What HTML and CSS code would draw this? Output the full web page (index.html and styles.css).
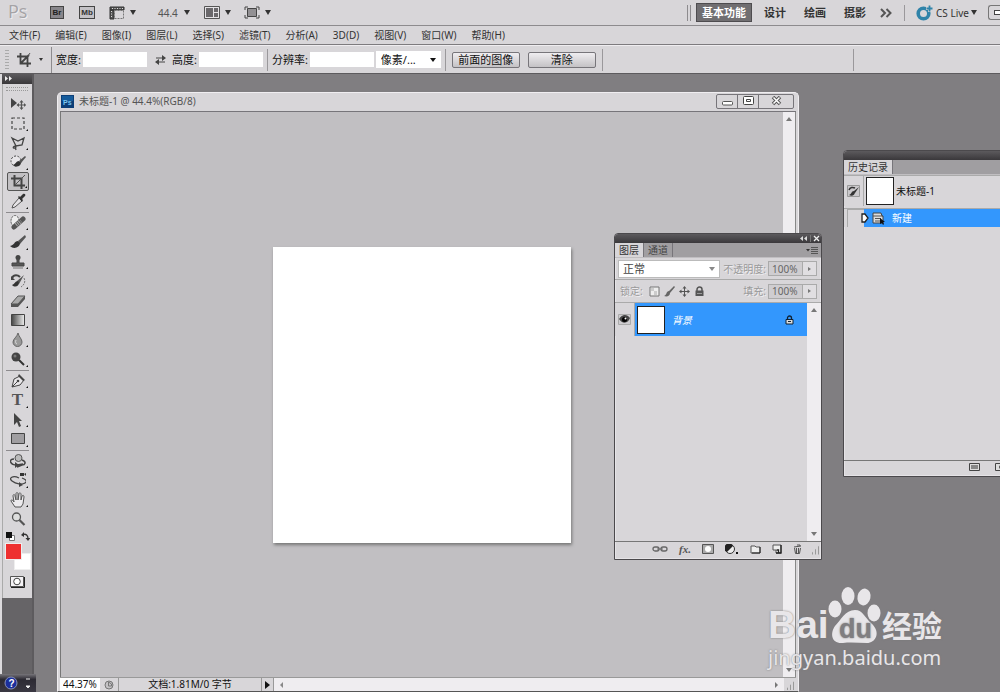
FILE: index.html
```
<!DOCTYPE html>
<html lang="zh-CN">
<head>
<meta charset="utf-8">
<title>Ps</title>
<link rel="stylesheet" href="styles.css">
</head>
<body>
<div class="app">
  <header class="appbar">
    <span class="logo">Ps</span>
    <button class="chip chip-br" aria-label="Bridge">Br</button>
    <button class="chip chip-mb" aria-label="Mini Bridge">Mb</button>
    <button class="drop" aria-label="查看额外内容"><svg width="16" height="14" viewBox="0 0 16 14"><path d="M1 1h14v3H1zM1 4h4v9H1z" fill="#555" stroke="#333"/><path d="M3 2.500h11M2.500 5v7" stroke="#ddd" stroke-dasharray="1 1.500"/><path d="M5.500 4.500h9v8h-9z" fill="#d8d6d9" stroke="#777" stroke-dasharray="2 1"/></svg><i class="caret"></i></button>
    <button class="drop zoom">44.4<i class="caret"></i></button>
    <button class="drop arrange" aria-label="排列文档"><svg width="16" height="14" viewBox="0 0 16 14"><path d="M.5.5h15v12H.5z" fill="#e5e3e6" stroke="#555"/><path d="M2 2h7v9H2zM10 2h4v4h-4zM10 7h4v4h-4z" fill="#6a686b"/></svg><i class="caret"></i></button>
    <button class="drop" aria-label="屏幕模式"><svg width="16" height="14" viewBox="0 0 16 14"><path d="M3.500 2.500h9v8h-9z" fill="#929093" stroke="#444"/><path d="M1 4V1h3M12 1h3v3M15 9v3h-3M4 12H1V9" fill="none" stroke="#444"/></svg><i class="caret"></i></button>
    <nav class="spaces">
      <span class="grip2"></span>
      <button class="space on">基本功能</button>
      <button class="space">设计</button>
      <button class="space">绘画</button>
      <button class="space">摄影</button>
      <button class="more" aria-label="更多"><svg width="12" height="10" viewBox="0 0 12 10"><path d="M1 1l4 4-4 4M6.500 1l4 4-4 4" fill="none" stroke="#555" stroke-width="2"/></svg></button>
      <button class="live"><svg width="17" height="16" viewBox="0 0 17 16"><circle cx="7.500" cy="8.500" r="5.300" fill="none" stroke="#2f83a9" stroke-width="3.600"/><path d="M13.500 0v7M10 3.500h7" stroke="#d8d6d9" stroke-width="3"/><path d="M13.500.5v6M10.500 3.500h6" stroke="#2f83a9" stroke-width="1.800"/></svg>CS Live<i class="caret"></i></button>
      <button class="minapp" aria-label="最小化"><i></i></button>
    </nav>
  </header>
  <nav class="menubar">
    <button>文件(F)</button><button>编辑(E)</button><button>图像(I)</button><button>图层(L)</button><button>选择(S)</button><button>滤镜(T)</button><button>分析(A)</button><button>3D(D)</button><button>视图(V)</button><button>窗口(W)</button><button>帮助(H)</button>
  </nav>
  <section class="options">
    <span class="dots"></span>
    <button class="current" aria-label="裁剪工具"><svg width="16" height="16" viewBox="0 0 16 16"><path d="M4.500 1v10.500H15M1 4.500h10.500V15M5 11l8-8" fill="none" stroke="#444" stroke-width="1.800"/><path d="M12 4l2-3" stroke="#555"/></svg><i class="caret small"></i></button>
    <div class="fields">
      <label for="w">宽度:</label><input id="w" type="text">
      <button class="swap" aria-label="交换宽度和高度"><svg width="11" height="10" viewBox="0 0 11 10"><path d="M1 3h8M2 7h8" stroke="#444"/><path d="M7 0l4 3-4 3zM4 4L0 7l4 3z" fill="#444"/></svg></button>
      <label for="h">高度:</label><input id="h" type="text">
    </div>
    <div class="fields">
      <label for="r">分辨率:</label><input id="r" type="text">
      <span class="unit"><select aria-label="单位"><option>像素/...</option></select></span>
    </div>
    <div class="actions"><button>前面的图像</button><button>清除</button></div>
    <span class="end"></span>
  </section>

  <main class="workspace">
    <aside class="tools">
      <div class="tools-head"><svg width="8" height="5" viewBox="0 0 8 5"><path d="M0 0l3 2.500L0 5zM4 0l3 2.500L4 5z" fill="#eee"/></svg></div>
      <div class="palette">
        <span class="handle"></span>
        <div class="group">
          <button class="plain" aria-label="移动"><svg viewBox="0 0 16 16"><path d="M1 2v10l6-5z" fill="#444"/><path d="M11.500 5v8M7.500 9h8" stroke="#555" stroke-width="1.200"/><path d="M11.500 4l2 2.500h-4zM11.500 14l2-2.500h-4zM6.500 9L9 7v4zM16 9l-2-2v4z" fill="#555"/></svg></button>
          <button aria-label="矩形选框"><svg viewBox="0 0 16 16"><path d="M2 3h12v11H2z" fill="none" stroke="#444" stroke-width="1.200" stroke-dasharray="3 2"/></svg></button>
          <button aria-label="套索"><svg viewBox="0 0 16 16"><path d="M2 3l6 3 6-3-2 7-6 1zM6 11c-4 0-3 3-1 2s1-3 0-2l1 4" fill="none" stroke="#444" stroke-width="1.300"/></svg></button>
          <button aria-label="快速选择"><svg viewBox="0 0 16 16"><circle cx="6" cy="7" r="5" fill="#e8e6e9" stroke="#444" stroke-dasharray="2 1.500"/><path d="M15 2l-6 5 2 2 5-6z" fill="#555"/><path d="M9 7c-3 0-3 3-6 4 3 3 8 1 8-2z" fill="#333"/></svg></button>
          <button class="on" aria-label="裁剪"><svg viewBox="0 0 16 16"><path d="M4.500 1v10.500H15M1 4.500h10.500V15" fill="none" stroke="#444" stroke-width="2"/><path d="M5 11l10-10" stroke="#555"/></svg></button>
          <button aria-label="吸管"><svg viewBox="0 0 16 16"><path d="M9 5l3 3-7 6-3 1 1-3z" fill="#e5e3e6" stroke="#555"/><path d="M8 4l1-1 1 1 3-3c2-1 3 1 2 2l-3 3 1 1-1 2z" fill="#333"/></svg></button>
        </div>
        <div class="group">
          <button aria-label="修复画笔"><svg viewBox="0 0 16 16"><ellipse cx="5" cy="6" rx="4" ry="5.500" fill="#eee" stroke="#555" stroke-dasharray="2 1"/><path d="M4 12L13 4" stroke="#555" stroke-width="5" stroke-linecap="round"/><path d="M6 10l5-4" stroke="#aaa" stroke-width="4" stroke-dasharray="1 1"/></svg></button>
          <button aria-label="画笔"><svg viewBox="0 0 16 16"><path d="M15 1L8 7l2 3 6-7z" fill="#555"/><path d="M8 7C4 7 5 11 0 12c4 4 10 1 10-3z" fill="#333"/></svg></button>
          <button aria-label="图章"><svg viewBox="0 0 16 16"><circle cx="8" cy="3.500" r="2.500" fill="#444"/><path d="M7 5h2v4h5v3H2V9h5z" fill="#555" stroke="#444"/><path d="M3 14h10" stroke="#777"/></svg></button>
          <button aria-label="历史记录画笔"><svg viewBox="0 0 16 16"><path d="M2 5c2-4 6-3 8-1" fill="none" stroke="#444" stroke-width="2"/><path d="M1 3v4h4z" fill="#444"/><path d="M14 2L7 8l2 3z" fill="#555"/><path d="M8 8c-3 0-3 3-6 4 3 3 7 1 7-2z" fill="#333"/><path d="M14 5c2 4 0 7-3 9" fill="none" stroke="#777" stroke-dasharray="2 1"/></svg></button>
          <button aria-label="橡皮擦"><svg viewBox="0 0 16 16"><path d="M8 3h7l-7 8H1z" fill="#aaa" stroke="#555"/><path d="M1 11h7l7-8v3l-7 8H1z" fill="#555"/></svg></button>
          <button aria-label="渐变"><svg viewBox="0 0 16 16"><defs><linearGradient id="g"><stop stop-color="#444"/><stop offset="1" stop-color="#eee"/></linearGradient></defs><path d="M1.500 2.500h13v11h-13z" fill="url(#g)" stroke="#444"/></svg></button>
          <button aria-label="模糊"><svg viewBox="0 0 16 16"><path d="M8 1c1 4 4 6 4 9a4 4 0 0 1-9 0c0-3 4-5 5-9z" fill="#999" stroke="#666"/><path d="M6 8c-1 2 0 4 1 4" stroke="#ddd" fill="none"/></svg></button>
          <button aria-label="减淡"><svg viewBox="0 0 16 16"><circle cx="6" cy="6" r="4.500" fill="#444"/><path d="M9 9l5 5" stroke="#333" stroke-width="2"/><circle cx="5" cy="5" r="1.500" fill="#777"/></svg></button>
        </div>
        <div class="group">
          <button aria-label="钢笔"><svg viewBox="0 0 16 16"><path d="M2 14l2-8 6-3 4 4-4 5z" fill="#e8e6e9" stroke="#444"/><path d="M9 1l6 6-2 1-5-5z" fill="#444"/><path d="M2 14l5-5" stroke="#444"/><circle cx="8" cy="8" r="1.300" fill="#444"/></svg></button>
          <button class="type" aria-label="文字">T</button>
          <button aria-label="路径选择"><svg viewBox="0 0 16 16"><path d="M4 1l8 8H9l2 5-2 1-2-5-3 3z" fill="#444"/></svg></button>
          <button aria-label="矩形"><svg viewBox="0 0 16 16"><path d="M1.500 2.500h13v10h-13z" fill="#a09ea1" stroke="#444"/></svg></button>
        </div>
        <div class="group">
          <button aria-label="3D 旋转"><svg viewBox="0 0 16 16"><path d="M4 6C-2 6 0 12 7 12l6-1M12 7c5 2 3 5 0 5l-5 2" fill="none" stroke="#444" stroke-width="1.500"/><circle cx="8.500" cy="5" r="3.500" fill="#bbb" stroke="#555"/><path d="M5 9l4 3-4 3z" fill="#444"/></svg></button>
          <button aria-label="3D 相机"><svg viewBox="0 0 16 16"><path d="M9 6C3 3-2 6 2 9s10 4 13 2 0-4-3-5" fill="none" stroke="#444" stroke-width="1.300"/><path d="M10 1h4v3h-4zM14 2l2-1v3z" fill="#333"/><path d="M9 10l4 3-4 2z" fill="#444"/></svg></button>
          <button aria-label="抓手"><svg viewBox="0 0 16 16"><path d="M5 15L1 9c0-2 2-1 3 1L3 4c0-2 2-2 2 0l1 4V2c0-2 2-2 2 0v6l1-6c0-2 2-1 2 0v6l1-4c1-1 2-1 2 1l-1 7-2 3z" fill="#eceaed" stroke="#555"/></svg></button>
          <button class="plain" aria-label="缩放"><svg viewBox="0 0 16 16"><circle cx="6.500" cy="6" r="4" fill="#ddd" stroke="#555" stroke-width="1.300"/><path d="M9.500 9l5 5" stroke="#555" stroke-width="2.200"/></svg></button>
        </div>
        <div class="reset">
          <button aria-label="默认颜色"><svg width="9" height="9" viewBox="0 0 9 9"><path d="M3.500 3.500h5v5h-5z" fill="#fff" stroke="#777"/><path d="M0 0h6v6H0z" fill="#111"/></svg></button>
          <button aria-label="切换颜色"><svg width="9" height="9" viewBox="0 0 9 9"><path d="M2 2.500c3-1 5 1 5 4" fill="none" stroke="#333" stroke-width="1.300"/><path d="M0 3l3-3v5zM7 9L4.500 6h5z" fill="#333"/></svg></button>
        </div>
        <div class="swatches"><button class="bg" aria-label="背景色"></button><button class="fg" aria-label="前景色"></button></div>
        <button class="mask" aria-label="快速蒙版"><svg width="15" height="12" viewBox="0 0 15 12"><path d="M.5.5h13v10H.5z" fill="#f4f2f5" stroke="#555"/><path d="M14.500 1v10.500H1" fill="none" stroke="#222"/><circle cx="7" cy="5.500" r="3.300" fill="#fff" stroke="#444"/></svg></button>
      </div>
    </aside>

    <section class="doc">
      <header class="doc-title">
        <svg width="13" height="13" viewBox="0 0 13 13"><path d="M0 0h13v13H0z" fill="#0d3f78"/><path d="M1 1h11v5H1z" fill="#155b9c"/><text x="2" y="9.500" class="ps">Ps</text></svg>
        <h1>未标题-1 @ 44.4%(RGB/8)</h1>
        <div class="winbtns">
          <button aria-label="最小化"><svg width="11" height="10" viewBox="0 0 11 10"><rect x=".5" y="5.500" width="10" height="3.500" rx="1" fill="#fff" stroke="#555"/></svg></button>
          <button aria-label="最大化"><svg width="11" height="10" viewBox="0 0 11 10"><rect x=".5" y=".5" width="10" height="8" rx="1" fill="#fff" stroke="#444"/><path d="M3.500 3.500h4v2h-4z" fill="#fff" stroke="#444"/></svg></button>
          <button class="close" aria-label="关闭"><svg width="11" height="10" viewBox="0 0 11 10"><path d="M2 1l7 7M9 1L2 8" stroke="#555" stroke-width="3.500"/><path d="M2.500 1.500l6 6M8.500 1.500l-6 6" stroke="#fff" stroke-width="1.500"/></svg></button>
        </div>
      </header>
      <div class="doc-body">
        <div class="canvas-area"><div class="canvas"></div></div>
        <div class="vscroll"><i class="up"></i><i class="down"></i></div>
      </div>
      <footer class="status">
        <input class="pct" type="text" value="44.37%" aria-label="缩放比例">
        <button class="clock" aria-label="版本"><svg width="10" height="10" viewBox="0 0 10 10"><circle cx="5" cy="5" r="4" fill="#c4c2c5" stroke="#777"/><path d="M4.500 2v4h3v-2z" fill="none" stroke="#777"/></svg></button>
        <output>文档:1.81M/0 字节</output>
        <button class="play" aria-label="状态菜单"><i class="tri"></i></button>
        <div class="hscroll"><i class="tri left"></i><i class="tri grey"></i></div>
        <span class="resize"></span>
      </footer>
    </section>

    <section class="panel layers">
      <header class="panel-head"><svg width="22" height="7" viewBox="0 0 22 7"><path d="M4 1L1 3.500 4 6zM8 1L5 3.500 8 6z" fill="#ddd"/><path d="M11.500 0v7" stroke="#777"/><path d="M15 1l5 5M20 1l-5 5" stroke="#eee" stroke-width="1.300"/></svg></header>
      <nav class="tabs"><button class="tab on">图层</button><button class="tab">通道</button><button class="pmenu" aria-label="面板菜单"><svg width="12" height="7" viewBox="0 0 12 7"><path d="M0 2h4L2 4.500z" fill="#333"/><path d="M5 .5h7M5 2.500h7M5 4.500h7M5 6.500h7" stroke="#555"/></svg></button></nav>
      <div class="prow">
        <span class="blend"><select aria-label="混合模式"><option>正常</option></select></span>
        <label for="op">不透明度:</label><span class="num"><input id="op" type="text" value="100%" disabled><button aria-label="不透明度滑块"><i class="tri grey tiny"></i></button></span>
      </div>
      <div class="prow lockrow">
        <span class="dim">锁定:</span>
        <button aria-label="锁定透明像素"><svg width="11" height="11" viewBox="0 0 11 11"><path d="M1 1h9v9H1z" fill="#eee" stroke="#777"/><path d="M2 2h3v3h3v4H5V5H2z" fill="#ccc"/></svg></button>
        <button aria-label="锁定图像像素"><svg width="11" height="11" viewBox="0 0 11 11"><path d="M10 0L5 5l1 2 5-6zM5 5C2 5 3 9 0 10c3 1 6 0 6-3z" fill="#666"/></svg></button>
        <button aria-label="锁定位置"><svg width="11" height="11" viewBox="0 0 11 11"><path d="M5.500 1v9M1 5.500h9" stroke="#555"/><path d="M5.500 0l2 2.500h-4zM5.500 11l2-2.500h-4zM0 5.500l2.500-2v4zM11 5.500l-2.500-2v4z" fill="#555"/></svg></button>
        <button aria-label="锁定全部"><svg width="11" height="11" viewBox="0 0 11 11"><path d="M3 5V3.500a2.500 2.500 0 0 1 5 0V5" fill="none" stroke="#555" stroke-width="1.500"/><path d="M1.500 4.500h8V10h-8z" fill="#555"/><path d="M3 7.500h5" stroke="#999"/></svg></button>
        <label for="fill">填充:</label><span class="num"><input id="fill" type="text" value="100%" disabled><button aria-label="填充滑块"><i class="tri grey tiny"></i></button></span>
      </div>
      <div class="list">
        <div class="rows">
          <div class="layer">
            <button class="cell" aria-label="可见性"><svg width="13" height="11" viewBox="0 0 13 11"><path d="M.5.5h12v10H.5z" fill="#cecccf" stroke="#aaa"/><path d="M1 5c3-5 8-5 11-1-2 6-8 6-11 1z" fill="#444"/><circle cx="6.500" cy="5.500" r="2.500" fill="#000"/><circle cx="7.500" cy="4.500" r="1" fill="#fff"/></svg></button>
            <span class="thumb"></span><em>背景</em>
            <svg class="lock" width="9" height="10" viewBox="0 0 9 10"><path d="M2.500 4.500V3a2 2 0 0 1 4 0v1.500" fill="none" stroke="#123" stroke-width="1.300"/><path d="M1 4.500h7v4.500H1z" fill="#ddd" stroke="#123"/><path d="M3 6.500h3" stroke="#123"/></svg>
          </div>
        </div>
        <div class="vscroll"><i class="up"></i><i class="down"></i></div>
      </div>
      <footer class="pfoot">
        <button aria-label="链接"><svg width="16" height="10" viewBox="0 0 16 10"><rect x="1" y="3" width="6" height="4" rx="2" fill="none" stroke="#666" stroke-width="1.300"/><rect x="9" y="3" width="6" height="4" rx="2" fill="none" stroke="#666" stroke-width="1.300"/><path d="M5 5h6" stroke="#666"/></svg></button>
        <button class="fx">fx.</button>
        <button aria-label="蒙版"><svg width="12" height="10" viewBox="0 0 12 10"><path d="M.5.5h11v9H.5z" fill="#aaa" stroke="#555"/><circle cx="6" cy="5" r="3" fill="#fff"/></svg></button>
        <button aria-label="调整"><svg width="14" height="10" viewBox="0 0 14 10"><circle cx="5" cy="5" r="4.500" fill="#eee" stroke="#333"/><path d="M8 2A4.500 4.500 0 1 0 2 8z" fill="#222"/><path d="M11 9h2" stroke="#111" stroke-width="2"/></svg></button>
        <button aria-label="新建组"><svg width="11" height="10" viewBox="0 0 11 10"><path d="M1 2h4l1 1h4v6H1z" fill="#eee" stroke="#555"/><path d="M10 3v6H2" fill="none" stroke="#222"/></svg></button>
        <button aria-label="新建图层"><svg width="10" height="10" viewBox="0 0 10 10"><path d="M1 1h8v8H4V6H1z" fill="#eee" stroke="#555"/><path d="M9 1v8H4M4.500 6h2v3" fill="none" stroke="#222" stroke-width="1.300"/></svg></button>
        <button aria-label="删除"><svg width="9" height="10" viewBox="0 0 9 10"><path d="M1.500 4l1 5.500h4l1-5.500M3.500 4v5M5.500 4v5M1 3l7-1M4 1h3v1" fill="none" stroke="#555"/></svg></button>
        <span class="resize"></span>
      </footer>
    </section>

    <section class="panel history">
      <header class="panel-head"></header>
      <nav class="tabs"><button class="tab on">历史记录</button></nav>
      <div class="snap"><button class="cell" aria-label="历史画笔源"><svg width="13" height="12" viewBox="0 0 13 12"><path d="M.5.5h12v11H.5z" fill="#cac8cb" stroke="#999"/><path d="M2 5c1-3 4-3 6-2" fill="none" stroke="#333" stroke-width="1.500"/><path d="M12 2L7 6l1 2zM7 6c-3 0-2 3-5 4 3 2 6 0 6-3z" fill="#333"/></svg></button><span class="thumb"></span><span>未标题-1</span></div>
      <div class="state"><span class="slot"></span><svg class="knob" width="8" height="10" viewBox="0 0 8 10"><path d="M1 1h3l3 4-3 4H1z" fill="#fff" stroke="#222" stroke-width="1.300"/></svg><svg width="13" height="13" viewBox="0 0 13 13"><path d="M1 1h8l1 3h1v7H1z" fill="#ddd" stroke="#444"/><path d="M1 4h10M3 6.500h6M3 9h6" stroke="#555"/><path d="M8 6v6l2-1 1 2 1-1-1-2h2z" fill="#111"/></svg><span>新建</span></div>
      <div class="grow"></div>
      <footer class="pfoot">
        <button aria-label="从当前状态创建新文档"><svg width="11" height="9" viewBox="0 0 11 9"><path d="M.5.5h10v7H.5z" fill="#ddd" stroke="#444"/><path d="M2 3h7M2 5h7" stroke="#333"/></svg></button>
        <button aria-label="创建新快照"><svg width="12" height="9" viewBox="0 0 12 9"><path d="M.5.5h10v7H.5z" fill="#ddd" stroke="#444"/><circle cx="6" cy="4" r="2" fill="#555"/></svg></button>
      </footer>
    </section>

    <div class="lang"><svg width="14" height="14" viewBox="0 0 14 14"><circle cx="7" cy="7" r="6" fill="#1a2f9c" stroke="#8790b8"/><text x="4.500" y="10.500" class="q">?</text></svg><svg width="6" height="12" viewBox="0 0 6 12"><path d="M1 2h4M1 9h4L3 11z" fill="#eee" stroke="#eee"/></svg></div>

    <div class="mark">
      <div class="mark-top"><span class="bai">Bai</span>
        <svg width="54" height="57" viewBox="0 0 54 57"><g class="paw"><ellipse cx="7" cy="22" rx="6.500" ry="8.500"/><ellipse cx="20" cy="9" rx="6.500" ry="9"/><ellipse cx="36" cy="10" rx="6.500" ry="8.500" transform="rotate(12 36 10)"/><ellipse cx="46" cy="26" rx="6.500" ry="8.500"/><path d="M27 23c8 0 10 8 16 13 11 10 4 20-4 20-8 0-16-1-24 0C3 57 2 46 7 39c6-6 10-16 20-16z"/></g><text x="11" y="51" class="du">du</text></svg>
        <span class="jy">经验</span></div>
      <div class="url">jingyan.baidu.com</div>
    </div>
  </main>
</div>
</body>
</html>
```
FILE: styles.css
```
* { box-sizing: border-box; }
html, body { height: 100%; }
body {
  margin: 0;
  overflow: hidden;
  background: #807e81;
  font: 10px/14px "Noto Sans", "Noto Sans CJK SC", sans-serif;
  color: #333;
}
button, input, select { margin: 0; padding: 0; border: 0; background: none; font: inherit; color: inherit; border-radius: 0; }
button { display: inline-flex; align-items: center; justify-content: center; white-space: nowrap; flex: none; }
svg { display: block; flex: none; }
select { appearance: none; }
.app { display: flex; flex-direction: column; height: 100vh; }

.appbar { display: flex; align-items: center; height: 25px; padding-left: 8px; background: #d8d6d9; flex: none; }
.logo { width: 42px; font: 18px/20px "Open Sans", sans-serif; color: #a5a3a6; text-shadow: 1px 1px 0 #efedf0; margin-bottom: 3px; }
.chip { height: 13px; border: 1px solid #444; font: bold 8px/11px "Liberation Sans", sans-serif; }
.chip-br { width: 14px; background: #88868b; color: #222; margin-right: 15px; }
.chip-mb { width: 16px; background: #c4c2c6; margin-right: 14px; }
.drop { gap: 5px; margin-right: 22px; color: #555; }
.zoom { gap: 6px; margin-right: 14px; }
.arrange { margin-right: 13px; }
.caret { width: 0; height: 0; border: 3px solid transparent; border-top: 5px solid #333; border-bottom: 0; }
.caret.small { border-width: 3px 2px 0; }
.spaces { display: flex; align-items: center; margin-left: auto; }
.grip2 { width: 4px; height: 16px; border: solid #8d8b8e; border-width: 0 1px; margin-right: 5px; }
.space { height: 19px; margin-right: 10px; padding: 0 4px; font-size: 11px; font-weight: bold; }
.space.on { width: 56px; margin-right: 8px; background: #706e71; border: 1px solid #4e4c4f; color: #fff; }
.more { margin: 0 12px 0 0; }
.live { height: 16px; gap: 3px; padding-left: 11px; border-left: 1px solid #9a989b; }
.live .caret { margin-left: -1px; }
.minapp { width: 12px; height: 15px; margin-left: 11px; border: 1px solid #777; border-right: 0; border-radius: 3px 0 0 3px; justify-content: flex-end; }
.minapp i { width: 6px; height: 5px; border: 1px solid #444; border-right: 0; background: #fff; }

.menubar { display: flex; align-items: center; gap: 15px; height: 20px; padding-left: 9px; background: #d8d6d9; border-top: 1px solid #8d8b8e; border-bottom: 1px solid #7d7b7e; flex: none; }

.options { display: flex; align-items: center; height: 29px; padding-left: 5px; background: #d8d6d9; border-top: 1px solid #efedf0; border-bottom: 1px solid #5d5b5e; flex: none; font-size: 11px; color: #111; }
.dots { width: 4px; height: 20px; background: repeating-linear-gradient(#aaa 0 1px, transparent 1px 3px); }
.current { width: 43px; height: 26px; gap: 7px; border-right: 1px solid #8d8b8e; justify-content: flex-end; padding-right: 8px; }
.fields { display: flex; align-items: center; height: 22px; padding-left: 4px; border-right: 1px solid #9a989b; }
.fields input { width: 64px; height: 15px; margin-left: 2px; background: #fff; }
.swap { margin: 0 6px 0 8px; }
.fields:nth-of-type(1) { padding-right: 4px; }
.unit, .blend { position: relative; display: flex; }
.unit { margin: 0 4px 0 2px; }
.unit select { width: 65px; height: 17px; padding-left: 5px; background: #fff; }
.unit::after, .blend::after { content: ""; position: absolute; right: 5px; top: 7px; border: 3px solid transparent; border-top: 4px solid #111; border-bottom: 0; pointer-events: none; }
.actions { display: flex; gap: 8px; padding: 0 6px; height: 22px; align-items: center; border-right: 1px solid #9a989b; }
.actions button { width: 68px; height: 16px; border: 1px solid #77757a; border-radius: 2px; background: linear-gradient(#efedf0, #c4c2c5); }
.end { width: 1px; height: 22px; background: #9a989b; margin: 0 146px 0 auto; }

.workspace { position: relative; flex: 1; min-height: 0; background: #807e81; }
.tools { display: flex; flex-direction: column; width: 34px; height: 100%; border: solid #5d5b5e; border-width: 0 2px 0 1px; border-left: 2px solid #dcdadd; background: #666467; }
.tools-head { height: 10px; padding: 2px 3px; background: linear-gradient(#5c5a5d, #3a383b); }
.palette { display: flex; flex-direction: column; background: #d8d6d9; padding-bottom: 8px; border-left: 1px solid #aaa; }
.handle { height: 4px; margin: 3px 4px 3px 3px; border-top: 1px dotted #999; border-bottom: 1px dotted #999; }
.group { display: flex; flex-direction: column; align-items: center; }
.group + .group { border-top: 1px solid #8d8b8e; margin: 1px 3px 0; }
.group button { position: relative; width: 22px; height: 19px; }
.group button:nth-child(even) { height: 20px; }
.group svg { width: 16px; height: 16px; }
.group button::after { content: ""; position: absolute; right: 1px; bottom: 2px; border: 1px solid #111; border-top-color: transparent; border-left-color: transparent; }
.group .plain::after { display: none; }
.group .on { border: 1px solid #555; border-radius: 2px; background: #c2c0c3; }
.group .type { font: bold 17px/18px "Liberation Serif", serif; color: #555; }
.reset { display: flex; justify-content: center; gap: 6px; height: 12px; padding-top: 2px; }
.swatches { position: relative; height: 30px; margin-top: 1px; }
.swatches button { position: absolute; width: 17px; height: 17px; border: 1px solid #eee; }
.fg { left: 2px; top: 1px; background: #ee3030; }
.bg { right: 1px; bottom: 2px; background: #fff; }
.mask { align-self: center; height: 16px; margin-top: 2px; }

.doc { position: absolute; left: 57px; right: 201px; top: 18px; bottom: 0; display: flex; flex-direction: column; border: 1px solid #f0eef1; border-bottom: 1px solid #555; border-radius: 5px 5px 0 0; background: #d8d6d9; padding: 0 2px; }
.doc-title { display: flex; align-items: center; height: 18px; padding: 0 0 2px 1px; flex: none; }
.doc-title h1 { margin: 0 auto 0 5px; font-size: 10px; font-weight: normal; color: #555; }
.ps { font: bold 7px "Liberation Sans", sans-serif; fill: #7cc7f2; }
.winbtns { display: flex; height: 15px; margin-right: 2px; border: 1px solid #77757a; border-radius: 2px; }
.winbtns button { width: 21px; border-right: 1px solid #77757a; }
.winbtns .close { width: 34px; border: 0; }
.doc-body { display: flex; flex: 1; min-height: 0; border-top: 1px solid #77757a; border-left: 1px solid #777; }
.canvas-area { flex: 1; display: flex; align-items: center; justify-content: center; background: #c1bfc2; }
.canvas { width: 298px; height: 296px; background: #fff; box-shadow: 1px 2px 3px #777; }
.vscroll { display: flex; flex-direction: column; align-items: center; justify-content: space-between; width: 13px; padding: 5px 0; background: #efedf0; border-right: 1px solid #888; }
.up, .down { border: 3px solid transparent; }
.up { border-top: 0; border-bottom: 4px solid #777; }
.down { border-bottom: 0; border-top: 4px solid #777; }
.status { display: flex; height: 14px; border-top: 1px solid #999; flex: none; font-size: 10px; line-height: 13px; color: #111; }
.pct { width: 40px; background: #fff; padding-left: 3px; }
.clock { width: 19px; border-right: 1px solid #999; }
.status output { width: 143px; text-align: center; border-right: 1px solid #999; }
.play { width: 12px; border-right: 1px solid #999; }
.tri { border: 4px solid transparent; border-left: 5px solid #111; border-right: 0; }
.tri.grey { border-width: 3px 0 3px 3px; border-left-color: #777; }
.tri.tiny { border-width: 2px 0 2px 3px; }
.tri.left { border: 3px solid transparent; border-left: 0; border-right: 3px solid #888; }
.hscroll { flex: 1; display: flex; align-items: center; justify-content: space-between; padding: 0 6px; background: #efedf0; }
.resize { width: 12px; height: 12px; background: repeating-linear-gradient(90deg, #999 0 1px, transparent 1px 3px); clip-path: polygon(100% 10%, 100% 100%, 10% 100%); }

.panel { position: absolute; display: flex; flex-direction: column; border: 1px solid #4b494c; border-radius: 4px 4px 0 0; background: #d8d6d9; box-shadow: inset 0 0 0 1px #e6e4e7; }
.layers { right: 178px; top: 159px; width: 208px; height: 327px; }
.history { left: 843px; right: -14px; top: 76px; height: 327px; }
.panel-head { display: flex; align-items: center; justify-content: flex-end; height: 9px; background: linear-gradient(#5c5a5d, #3a383b); border-radius: 3px 3px 0 0; flex: none; }
.tabs { display: flex; height: 15px; background: #a09ea1; border-bottom: 1px solid #c0bec1; flex: none; }
.tab { padding: 0 4px; color: #444; border-right: 1px solid #77757a; }
.tab.on { padding: 0 4px; background: #d8d6d9; color: #333; }
.pmenu { margin: 0 3px 0 auto; }
.prow { display: flex; align-items: center; height: 22px; padding: 0 4px 0 3px; border-bottom: 1px solid #aaa; color: #999; flex: none; }
.prow label { margin: 0 2px 0 auto; text-shadow: 1px 1px 0 #f0eef1; white-space: nowrap; }
.blend select { width: 102px; height: 18px; padding-left: 4px; background: #fff; border: 1px solid #bbb; color: #444; font-size: 11px; }
.blend::after { border-top-color: #888; }
.num { display: flex; height: 15px; border: 1px solid #aaa; }
.num input { width: 34px; padding-left: 3px; background: #cfcdd0; border-right: 1px solid #aaa; color: #666; }
.num button { width: 13px; background: #e0dee1; }
.lockrow { height: 23px; }
.lockrow > button { margin-left: 4px; }
.dim { margin: 0 2px; text-shadow: 1px 1px 0 #f0eef1; }
.list { display: flex; flex: 1; min-height: 0; }
.rows { flex: 1; }
.layer { display: flex; align-items: center; height: 33px; background: #3397fd; color: #fff; }
.cell { width: 20px; align-self: stretch; background: #d8d6d9; border-right: 1px solid #aaa; }
.thumb { width: 28px; height: 28px; background: #fff; border: 1px solid #222; margin: 0 7px 0 2px; flex: none; }
.lock { margin: 0 13px 0 auto; }
.list .vscroll { width: 14px; border: 0; }
.pfoot { display: flex; align-items: center; justify-content: flex-end; gap: 11px; height: 18px; padding-bottom: 4px; border-top: 1px solid #777; flex: none; }
.layers .resize { margin-left: -4px; }
.fx { font: italic bold 11px/12px "Liberation Serif", serif; color: #555; }
.snap { display: flex; align-items: center; height: 34px; border-bottom: 1px solid #aaa; border-top: 1px solid #aaa; color: #111; padding-bottom: 2px; }
.snap .thumb { margin: 0 2px; }
.state { display: flex; align-items: center; height: 18px; background: #3397fd; color: #fff; gap: 3px; }
.state > span:last-child { margin-left: 4px; }
.slot { width: 20px; align-self: stretch; background: #d8d6d9; border: 1px solid #aaa; border-width: 1px 0 0 1px; margin-left: 3px; width: 17px; box-shadow: -3px 0 0 #d8d6d9; }
.knob { margin-left: -6px; }
.grow { flex: 1; }
.history .pfoot { height: 16px; padding: 0 6px 3px 0; gap: 15px; }

.lang { position: absolute; left: 0; bottom: 0; display: flex; align-items: center; justify-content: space-between; width: 36px; height: 18px; padding: 0 5px 0 4px; background: linear-gradient(#77757a, #2c2a33 30%, #3a3842); }
.q { font: bold 10px "Liberation Sans", sans-serif; fill: #fff; }

.mark { position: absolute; right: 53px; bottom: 20px; width: 179px; color: #e8e6e9; text-shadow: 0 0 2px #777; }
.mark-top { display: flex; align-items: flex-end; height: 57px; }
.bai { width: 60px; font: bold 39px/40px "Liberation Sans", sans-serif; height: 39px; }
.paw { fill: #e8e6e9; }
.du { font: bold 27px "Liberation Sans", sans-serif; fill: #807e81; }
.jy { font: bold 30px/40px "Noto Sans CJK SC", sans-serif; height: 40px; }
.url { font: 20px/28px "Noto Sans", sans-serif; }
```
